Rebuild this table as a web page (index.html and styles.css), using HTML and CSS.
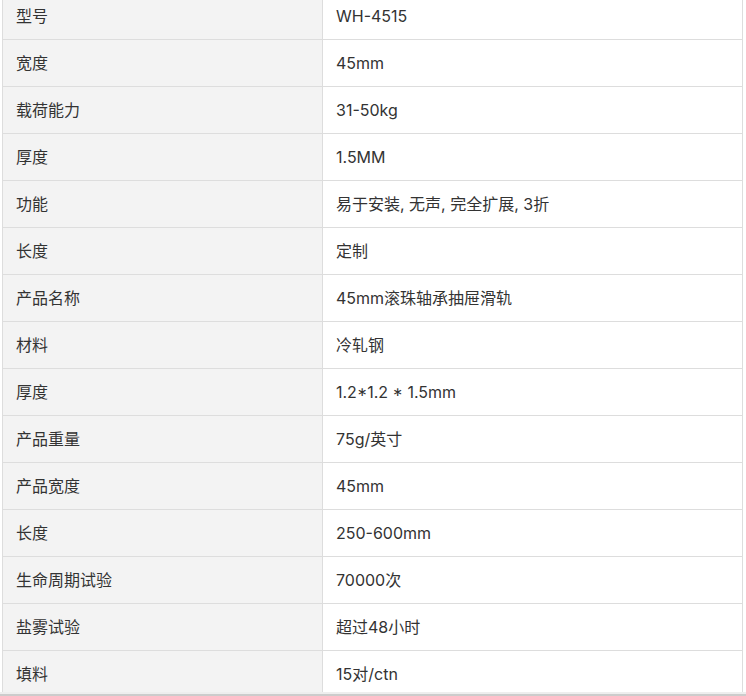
FILE: index.html
```html
<!DOCTYPE html>
<html lang="zh">
<head>
<meta charset="utf-8">
<link rel="stylesheet" href="styles.css">
</head>
<body>
<div class="viewport">
  <table class="spec">
    <tbody>
      <tr><td class="key">型号</td><td class="val">WH-4515</td></tr>
      <tr><td class="key">宽度</td><td class="val">45mm</td></tr>
      <tr><td class="key">载荷能力</td><td class="val">31-50kg</td></tr>
      <tr><td class="key">厚度</td><td class="val">1.5MM</td></tr>
      <tr><td class="key">功能</td><td class="val">易于安装, 无声, 完全扩展, 3折</td></tr>
      <tr><td class="key">长度</td><td class="val">定制</td></tr>
      <tr><td class="key">产品名称</td><td class="val">45mm滚珠轴承抽屉滑轨</td></tr>
      <tr><td class="key">材料</td><td class="val">冷轧钢</td></tr>
      <tr><td class="key">厚度</td><td class="val">1.2*1.2 * 1.5mm</td></tr>
      <tr><td class="key">产品重量</td><td class="val">75g/英寸</td></tr>
      <tr><td class="key">产品宽度</td><td class="val">45mm</td></tr>
      <tr><td class="key">长度</td><td class="val">250-600mm</td></tr>
      <tr><td class="key">生命周期试验</td><td class="val">70000次</td></tr>
      <tr><td class="key">盐雾试验</td><td class="val">超过48小时</td></tr>
      <tr><td class="key">填料</td><td class="val">15对/ctn</td></tr>
    </tbody>
  </table>
</div>
<div class="hscroll"></div>
</body>
</html>
```

FILE: styles.css
```css
html, body {
  margin: 0;
  padding: 0;
  background: #ffffff;
  overflow: hidden;
}
body {
  font-family: Inter, "Noto Sans CJK SC", sans-serif;
  font-size: 16px;
  color: #333333;
}
.viewport {
  height: 692px;
  overflow: hidden;
  padding-left: 2px;
}
.spec {
  border-collapse: collapse;
  width: 741px;
  margin-top: -8px;
}
.spec td {
  border: 1px solid #dddddd;
  padding: 13px 13px;
  line-height: 20px;
  vertical-align: middle;
  text-align: left;
}
.spec .key {
  width: 293px;
  background: #f3f3f3;
}
.spec .val {
  background: #ffffff;
}
.hscroll {
  height: 2px;
  background: #eeeeee;
  border-bottom: 2px solid #cccccc;
}
```
